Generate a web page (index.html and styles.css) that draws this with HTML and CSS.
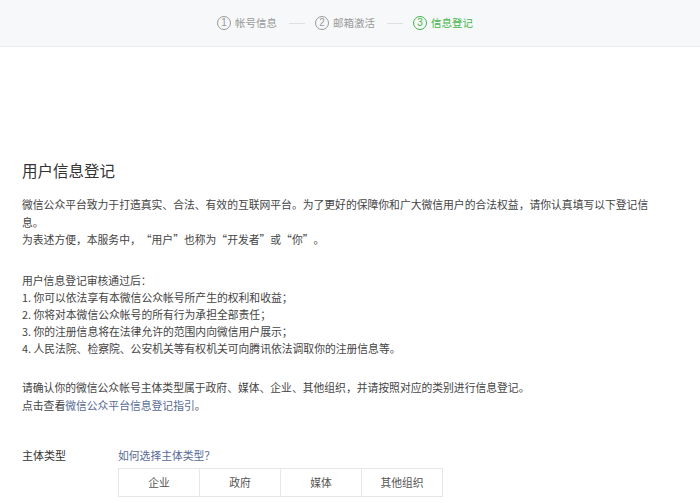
FILE: index.html
```html
<!DOCTYPE html>
<html lang="zh-CN">
<head>
<meta charset="utf-8">
<title>信息登记</title>
<link rel="stylesheet" href="styles.css">
</head>
<body>
<header class="steps-bar">
  <div class="step">
    <span class="step-num">1</span><span class="step-text">帐号信息</span>
  </div>
  <span class="step-line"></span>
  <div class="step">
    <span class="step-num">2</span><span class="step-text">邮箱激活</span>
  </div>
  <span class="step-line"></span>
  <div class="step step-current">
    <span class="step-num">3</span><span class="step-text">信息登记</span>
  </div>
</header>

<main class="content">
  <h1 class="title">用户信息登记</h1>

  <p class="para">微信公众平台致力于打造真实、合法、有效的互联网平台。为了更好的保障你和广大微信用户的合法权益，请你认真填写以下登记信息。<br>为表述方便，本服务中，“用户”也称为“开发者”或“你”。</p>

  <p class="para list">用户信息登记审核通过后：<br>1. 你可以依法享有本微信公众帐号所产生的权利和收益；<br>2. 你将对本微信公众帐号的所有行为承担全部责任；<br>3. 你的注册信息将在法律允许的范围内向微信用户展示；<br>4. 人民法院、检察院、公安机关等有权机关可向腾讯依法调取你的注册信息等。</p>

  <p class="para confirm">请确认你的微信公众帐号主体类型属于政府、媒体、企业、其他组织，并请按照对应的类别进行信息登记。<br>点击查看<a class="link" href="#">微信公众平台信息登记指引</a>。</p>

  <div class="form-row">
    <div class="form-label">主体类型</div>
    <div class="form-field">
      <a class="link" href="#">如何选择主体类型？</a>
      <div class="type-tabs">
        <span class="type-tab">企业</span>
        <span class="type-tab">政府</span>
        <span class="type-tab">媒体</span>
        <span class="type-tab">其他组织</span>
      </div>
    </div>
  </div>
</main>
</body>
</html>
```

FILE: styles.css
```css
html, body {
  margin: 0;
  padding: 0;
  background: #ffffff;
}

body {
  font-family: "Noto Sans CJK SC", "Noto Sans", sans-serif;
  color: #444444;
  font-size: 10.8px;
  text-spacing-trim: space-all;
}

.steps-bar {
  height: 46px;
  background: #f6f8f9;
  border-bottom: 1px solid #eaecee;
  display: flex;
  align-items: center;
  justify-content: center;
  padding-right: 10px;
  color: #9a9a9a;
}

.step {
  display: flex;
  align-items: center;
}

.step-num {
  width: 12px;
  height: 12px;
  border: 1px solid currentColor;
  border-radius: 50%;
  display: flex;
  align-items: center;
  justify-content: center;
  font-family: "Liberation Sans", sans-serif;
  font-size: 10px;
  line-height: 1;
  margin-right: 4px;
}

.step-text {
  font-size: 10.5px;
  line-height: 14px;
  width: 42px;
  white-space: nowrap;
}

.step-current {
  color: #44b549;
}

.step-line {
  width: 16px;
  height: 1px;
  background: #e0e0e0;
  margin: 0 10px 0 12px;
}

.content {
  width: 640px;
  padding: 0 0 0 22px;
}

.title {
  margin: 113px 0 0 0;
  font-size: 15.5px;
  font-weight: normal;
  line-height: 20px;
  color: #333333;
}

.para {
  margin: 16px 0 0 0;
  line-height: 17.5px;
}

.list {
  margin-top: 23px;
  line-height: 17px;
}

.confirm {
  margin-top: 21px;
  line-height: 18px;
}

.link {
  color: #576b95;
  text-decoration: none;
}

.form-row {
  display: flex;
  margin-top: 32px;
}

.form-label {
  width: 96px;
  font-size: 11px;
  line-height: 18px;
  color: #333333;
}

.form-field {
  display: flex;
  flex-direction: column;
}

.form-field .link {
  line-height: 18px;
}

.type-tabs {
  display: flex;
  margin-top: 4px;
  border: 1px solid #e7e7eb;
  width: max-content;
}

.type-tab {
  width: 80px;
  height: 27px;
  display: flex;
  align-items: center;
  justify-content: center;
  color: #555555;
  border-left: 1px solid #e7e7eb;
}

.type-tab:first-child {
  border-left: none;
}
```
